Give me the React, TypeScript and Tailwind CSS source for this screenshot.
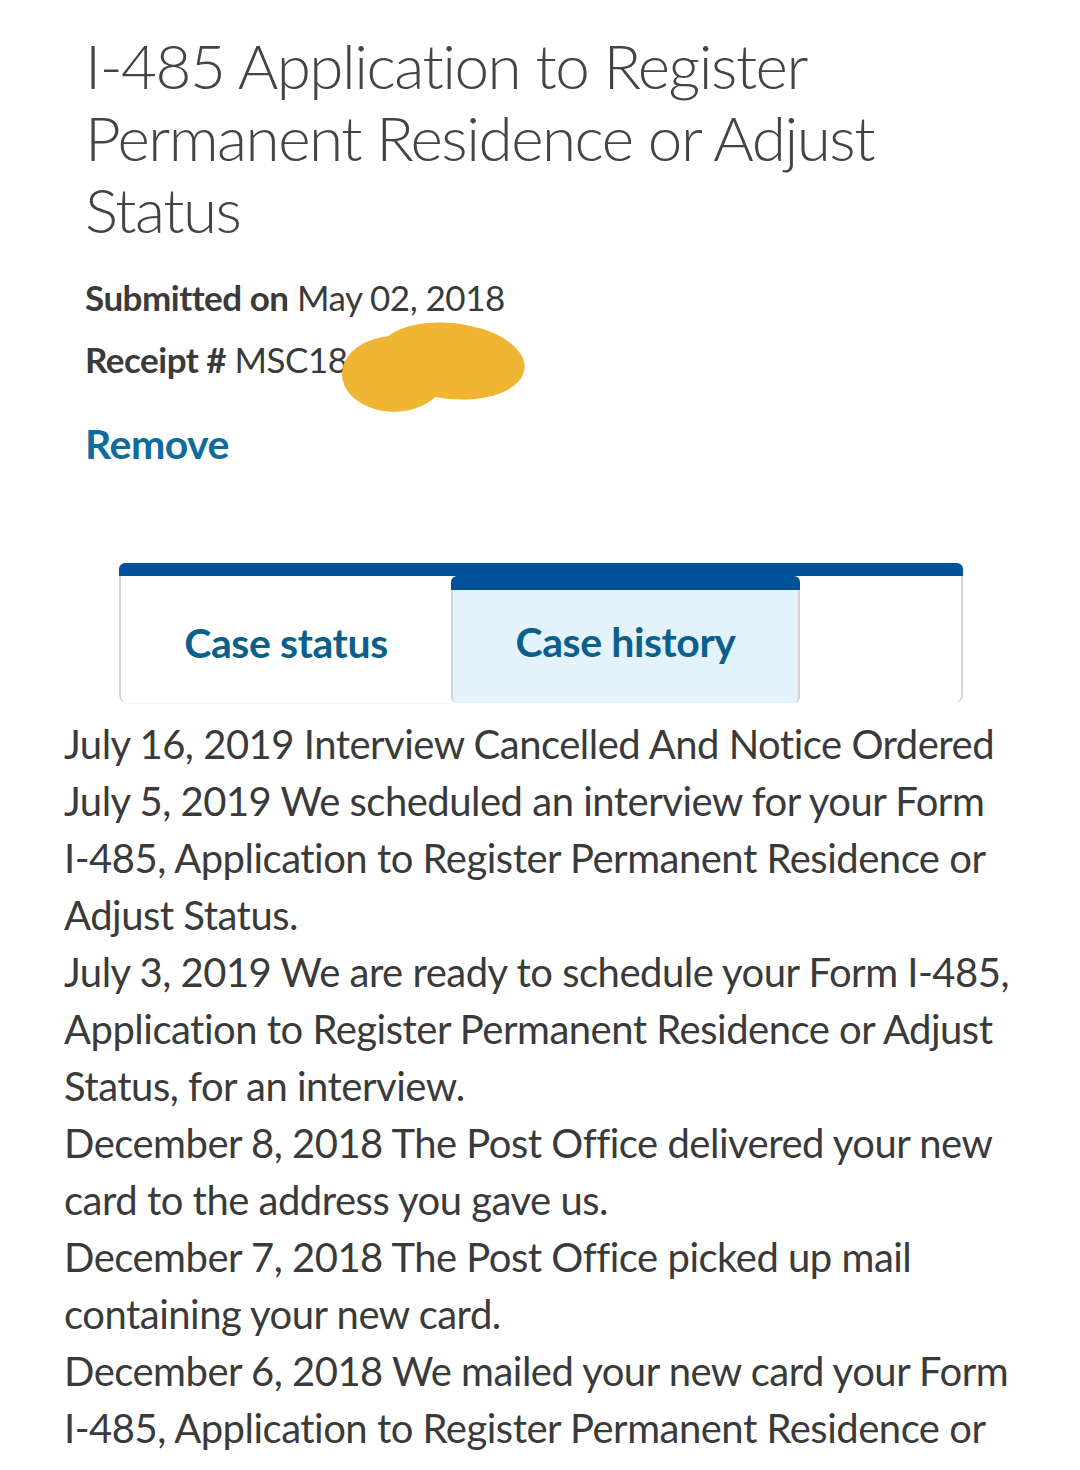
import React from 'react';

const history = [
  { date: 'July 16, 2019', text: 'Interview Cancelled And Notice Ordered' },
  {
    date: 'July 5, 2019',
    text: 'We scheduled an interview for your Form I-485, Application to Register Permanent Residence or Adjust Status.',
  },
  {
    date: 'July 3, 2019',
    text: 'We are ready to schedule your Form I-485, Application to Register Permanent Residence or Adjust Status, for an interview.',
  },
  { date: 'December 8, 2018', text: 'The Post Office delivered your new card to the address you gave us.' },
  { date: 'December 7, 2018', text: 'The Post Office picked up mail containing your new card.' },
  {
    date: 'December 6, 2018',
    text: 'We mailed your new card your Form I-485, Application to Register Permanent Residence or Adjust Status.',
  },
];

// keep the form number together so the line never breaks at its hyphen
const renderText = (text: string) =>
  text.split('I-485').map((part, i) => (
    <React.Fragment key={i}>
      {i > 0 && <span className="whitespace-nowrap">I-485</span>}
      {part}
    </React.Fragment>
  ));

const App = () => {
  return (
    <div className="w-[1080px] h-[1470px] overflow-hidden bg-white font-['Lato',sans-serif] text-[#3a3a3a]">
      <div className="pl-[85px] pr-10 pt-[29px]">
        <h1 className="text-[62px] leading-[72px] font-light tracking-[-1.5px] text-[#444]">
          I-485 Application to Register Permanent Residence or Adjust Status
        </h1>
        <div className="mt-[21px] text-[35px] leading-[62px] tracking-[-0.5px]">
          <p>
            <span className="font-bold">Submitted on</span> May 02, 2018
          </p>
          <p className="relative">
            <span className="font-bold">Receipt #</span> MSC18
            {/* redaction blot */}
            <span className="absolute left-[257px] top-[8px] w-[104px] h-[76px] rounded-[50%] bg-[#f0b532]" />
            <span className="absolute left-[292px] top-[-5px] w-[148px] h-[76px] rounded-[50%] bg-[#f0b532] rotate-[6deg]" />
          </p>
        </div>
        <button className="mt-[23px] text-[41px] font-bold text-[#0f6b9b] tracking-[-0.5px]">Remove</button>
      </div>

      <div className="mx-[119px] mt-[88px] w-[844px] flex flex-col">
        <div className="h-[13px] bg-[#00539b] rounded-t-[6px]" />
        <div className="flex h-[127px]">
          <div className="w-[332px] border-l-2 border-[#d4d4d4] rounded-bl-[8px] shadow-[0_1px_1px_rgba(0,0,0,0.04)] flex items-center justify-center pt-[8px]">
            <span className="text-[41px] font-bold text-[#0b5f8c] tracking-[-0.4px]">Case status</span>
          </div>
          <div className="w-[349px] flex flex-col">
            <div className="h-[14px] bg-[#00539b] rounded-t-[6px]" />
            <div className="flex-1 bg-[#e3f2fb] border-x-2 border-[#d4d4d4] rounded-b-[6px] flex items-center justify-center pb-[8px]">
              <span className="text-[41px] font-bold text-[#0b5f8c] tracking-[-0.4px]">Case history</span>
            </div>
          </div>
          <div className="flex-1 border-r-2 border-[#d4d4d4] rounded-br-[8px]" />
        </div>
      </div>

      <div className="pl-[64px] pr-[45px] pt-[13px] text-[40px] leading-[57px] tracking-[-0.5px]">
        {history.map((item) => (
          <p key={item.date}>
            {item.date} {renderText(item.text)}
          </p>
        ))}
      </div>
    </div>
  );
};

export default App;
